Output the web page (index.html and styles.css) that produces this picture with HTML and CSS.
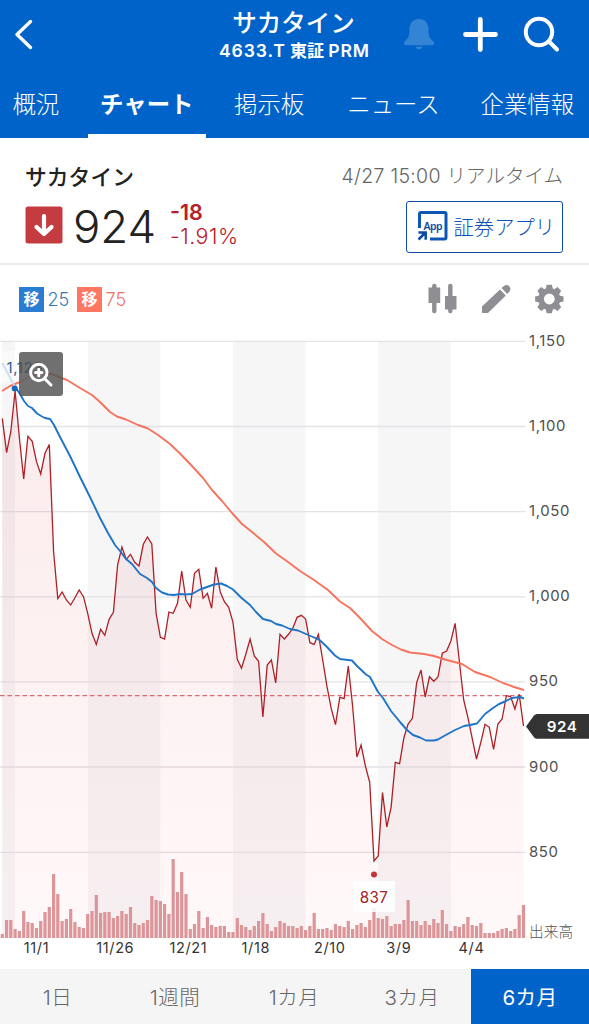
FILE: index.html
```html
<!DOCTYPE html>
<html lang="ja">
<head>
<meta charset="UTF-8">
<title>サカタインクス チャート</title>
<link rel="stylesheet" href="styles.css">
</head>

<body>

<header class="header">
  <div class="title-bar">
    <svg class="back" width="40" height="68" viewBox="0 0 40 68">
      <path d="M30.5 21.5 L17 34.5 L30.5 47.5"/>
    </svg>
    <div class="title">
      <div class="title-name">サカタイン</div>
      <div class="title-code">4633.T <span class="market">東証</span> PRM</div>
    </div>
    <svg class="actions" width="189" height="68" viewBox="400 0 189 68">
      <path class="bell" d="M419 19 C426 19 428.5 24 428.5 30 C428.5 37 430 38.5 433 41 C435 43 434 45.200 432.500 45.200 H405.500 C404 45.200 403 43 405 41 C408 38.500 409.500 37 409.500 30 C409.500 24 412 19 419 19 Z M415.500 46.800 H422.500 C422 49.900 416 49.900 415.500 46.800 Z"/>
      <path class="plus" d="M480.300 19.500 V49.500 M465.500 34.500 H495.500"/>
      <circle class="lens" cx="539" cy="32" r="13.200"/>
      <path class="handle" d="M549 41.500 L557 49.500"/>
    </svg>
  </div>

  <nav class="tabs">
    <a class="tab tab-overview">概況</a>
    <a class="tab tab-chart">チャート</a>
    <a class="tab tab-board">掲示板</a>
    <a class="tab tab-news">ニュース</a>
    <a class="tab tab-company">企業情報</a>
  </nav>
</header>

<section class="quote">
  <div class="quote-left">
    <div class="name">サカタイン</div>
    <div class="price-row">
      <svg class="down" width="38" height="38" viewBox="0 0 38 38">
        <rect x="0.500" y="0.500" width="37" height="37" rx="2.500"/>
        <path d="M19 10 V27 M11.500 21 L19 28 L26.500 21"/>
      </svg>
      <div class="price">924</div>
      <div class="change">
        <div class="diff">-18</div>
        <div class="percent">-1.91%</div>
      </div>
    </div>
  </div>
  <div class="quote-right">
    <div class="time">4/27 15:00 <span class="realtime">リアルタイム</span></div>
    <a class="app-button">
      <svg width="32" height="32" viewBox="0 0 32 32">
        <path class="frame" d="M2.500 18 V4 Q2.500 2.500 4 2.500 H27.500 Q29 2.500 29 4 V27.500 Q29 29 27.500 29 H13"/>
        <path class="arrow" d="M1.500 29.500 L8.500 22.500 M1.500 22.500 H8.700 V29.700"/>
        <text x="6.500" y="19.500" textLength="19">App</text>
      </svg>
      <span>証券アプリ</span>
    </a>
  </div>
</section>

<section class="toolbar">
  <div class="legend">
    <span class="mark mark-short">移</span><span class="days days-short">25</span>
    <span class="mark mark-long">移</span><span class="days days-long">75</span>
  </div>
  <svg class="tools" width="137" height="32" viewBox="427 283 137 32">
    <path class="wick" d="M434.300 286 V311 M450.300 286 V311"/>
    <path d="M428.500 287.500 H440.200 V303 H428.500 Z M445 296 H456.500 V309.500 H445 Z"/>
    <path d="M482 313 V306.500 L500 289.500 L505.800 295.500 L488 313 Z M501.500 288 L504.500 285.500 Q507 284 509.300 286.300 Q511.500 289 509.500 291.500 L507.200 294 Z"/>
    <g id="gear">
      <circle class="gear-ring" cx="549.300" cy="299" r="8.200"/>
    </g>
  </svg>
</section>

<svg class="chart" width="589" height="629" viewBox="0 340 589 629">
  <defs>
    <linearGradient id="area-fill" x1="0" y1="0" x2="0" y2="1">
      <stop offset="0" stop-color="#c8202c" stop-opacity="0.090"/>
      <stop offset="1" stop-color="#ff3040" stop-opacity="0.035"/>
    </linearGradient>
  </defs>
  <g class="bands">
    <rect x="2" y="341" width="13" height="597"/>
    <rect x="88" y="341" width="72.300" height="597"/>
    <rect x="233" y="341" width="72.300" height="597"/>
    <rect x="378" y="341" width="72.800" height="597"/>
  </g>
  <path class="grid" d="M0 341.300 H525.500 M0 426.500 H525.500 M0 511.600 H525.500 M0 596.800 H525.500 M0 681.900 H525.500 M0 767 H525.500 M0 852.300 H525.500"/>
  <path id="area" fill="url(#area-fill)"/>
  <path id="volume"/>
  <path class="previous" d="M0 695.600 H524"/>
  <polyline id="price-line"/>
  <polyline id="long-line"/>

  <rect class="label-back" x="0" y="351" width="47" height="31"/>
  <path class="faded" d="M2.300 363 L14.500 386"/>
  <polyline id="short-line"/>
  <text class="high" x="6.500" y="373">1,123</text>
  <circle class="high-dot" cx="14.700" cy="388.500" r="3"/>
  <circle class="low-dot" cx="374" cy="874.500" r="3"/>
  <rect class="low-back" x="353" y="881" width="42" height="31"/>
  <text class="low" x="374" y="903">837</text>

  <g class="y-axis">
    <text x="529" y="346">1,150</text>
    <text x="529" y="431">1,100</text>
    <text x="529" y="516">1,050</text>
    <text x="529" y="601">1,000</text>
    <text x="529" y="686">950</text>
    <text x="529" y="771.500">900</text>
    <text x="529" y="856.500">850</text>
  </g>
  <text class="volume-label" x="529" y="937">出来高</text>

  <g class="x-axis">
    <text x="36.500" y="953">11/1</text>
    <text x="115.300" y="953">11/26</text>
    <text x="188.300" y="953">12/21</text>
    <text x="255.800" y="953">1/18</text>
    <text x="329.800" y="953">2/10</text>
    <text x="398.800" y="953">3/9</text>
    <text x="471.500" y="953">4/4</text>
  </g>

  <path class="tag" d="M526 726.500 L534 715.500 Q535.500 714 537 714 H589 V738.700 H537 Q535.500 738.700 534 737.200 Z"/>
  <text class="tag-text" x="562" y="732">924</text>

  <!-- zoom button -->
  <rect class="zoom-back" x="19" y="352" width="44" height="44" rx="3"/>
  <g class="zoom-icon">
    <circle cx="38.800" cy="372.500" r="8.200"/>
    <path d="M45 379 L51 385 M38.800 369.300 V375.700 M35.600 372.500 H42"/>
  </g>
</svg>

<nav class="periods">
  <a class="period">1日</a>
  <a class="period">1週間</a>
  <a class="period">1カ月</a>
  <a class="period">3カ月</a>
  <a class="period selected">6カ月</a>
</nav>

<script src="chart.js"></script>
</body>
</html>
```

FILE: styles.css
```css
body {
  margin: 0;
  width: 589px;
  height: 1024px;
  display: flex;
  flex-direction: column;
  background: #fff;
  color: #222;
  font-family: Inter, "Noto Sans CJK JP", sans-serif;
  overflow: hidden;
}

svg {
  display: block;
  flex: none;
}

/* header */
.header {
  height: 138px;
  background: #0063c9;
  color: #fff;
}

.title-bar {
  height: 70px;
  display: grid;
  grid-template-columns: 189px 211px 189px;
}

.title {
  text-align: center;
  padding-top: 7px;
}

.title-name {
  height: 32px;
  line-height: 32px;
  font-size: 24.5px;
  font-weight: 500;
  margin-left: -2px;
}

.title-code {
  height: 22px;
  line-height: 24px;
  font-size: 17.6px;
  font-weight: 600;
  letter-spacing: 0.85px;
  white-space: nowrap;
}

.market {
  font-size: 17px;
  letter-spacing: 0;
  margin: 0 -1px;
}

.back path, .plus, .lens, .handle {
  fill: none;
  stroke: #fff;
  stroke-width: 4;
  stroke-linecap: round;
  stroke-linejoin: round;
}

.back path {
  stroke-width: 3.4;
}

.plus {
  stroke-width: 4.8;
}

.bell {
  fill: #3484d6;
}

.tabs {
  height: 68px;
  display: flex;
  font-size: 23.4px;
  font-weight: 300;
}

.tab {
  box-sizing: border-box;
  height: 68px;
  line-height: 69px;
  text-align: center;
  white-space: nowrap;
}

.tab-overview {
  width: 72px;
  margin-right: 16px;
}

.tab-chart {
  width: 119px;
  font-weight: 700;
  border-bottom: 4px solid #fff;
}

.tab-board {
  width: 127px;
}

.tab-news {
  width: 120px;
}

.tab-company {
  width: 127px;
  margin-left: 11px;
}

.tab-news, .tab-company {
  padding-left: 3px;
}

/* price */
.quote {
  box-sizing: border-box;
  height: 127px;
  padding: 25px 26px 0 25px;
  display: flex;
  justify-content: space-between;
  border-bottom: 2px solid #ebebed;
}

.name {
  height: 28px;
  line-height: 28px;
  font-size: 21.8px;
  font-weight: 500;
}

.price-row {
  display: flex;
  height: 60px;
  padding-top: 9px;
}

.down {
  margin-top: 6px;
}

.down rect {
  fill: #c43c40;
}

.down path {
  fill: none;
  stroke: #fff;
  stroke-width: 4.2;
  stroke-linecap: round;
  stroke-linejoin: round;
}

.price {
  width: 97px;
  margin-left: 10px;
  font-size: 45.5px;
  font-weight: 300;
  line-height: 53px;
}

.change {
  color: #b5202a;
  font-size: 21.5px;
  line-height: 24px;
}

.diff {
  font-weight: 600;
}

.percent {
  font-weight: 300;
  letter-spacing: 0.5px;
}

.quote-right {
  display: flex;
  flex-direction: column;
  align-items: flex-end;
}

.time {
  height: 38px;
  line-height: 27px;
  color: #666;
  font-size: 19.5px;
  font-weight: 300;
  letter-spacing: 0.3px;
}

.realtime {
  letter-spacing: 0;
}

.app-button {
  box-sizing: border-box;
  width: 157px;
  height: 52px;
  padding: 0 7px 2px 10px;
  display: flex;
  align-items: center;
  justify-content: space-between;
  border: 1.5px solid #0c4ca8;
  border-radius: 3px;
  color: #0c52b8;
  font-size: 20.3px;
  font-weight: 300;
}

.frame {
  fill: none;
  stroke: #0e56b4;
  stroke-width: 3;
}

.arrow {
  fill: none;
  stroke: #0c4aa4;
  stroke-width: 2.5;
}

.app-button text {
  fill: #0c4aa4;
  font: 600 10.5px "Noto Sans", sans-serif;
}

/* indicators */
.toolbar {
  height: 75px;
  box-sizing: border-box;
  padding: 18px 25px 0 19px;
  display: flex;
  justify-content: space-between;
}

.legend {
  display: flex;
  height: 32px;
  align-items: center;
  font-size: 18px;
  font-weight: 300;
}

.mark {
  width: 25px;
  height: 25px;
  line-height: 24px;
  text-align: center;
  color: #fff;
  font-size: 16px;
  font-weight: 700;
}

.mark-short {
  background: #2b7cd3;
}

.mark-long {
  background: #ff7662;
}

.days {
  box-sizing: border-box;
  width: 33px;
  padding-left: 3.5px;
}

.days-short {
  color: #3278bb;
}

.days-long {
  color: #f37363;
}

.tools {
  fill: #8e8e93;
}

.wick {
  stroke: #8e8e93;
  stroke-width: 4.4;
  stroke-linecap: round;
}

.gear-ring {
  fill: none;
  stroke: #8e8e93;
  stroke-width: 5.6;
}

/* chart */
.chart {
  overflow: visible;
}

.bands {
  fill: #f6f6f7;
}

.grid {
  stroke: #e2e2e8;
  stroke-width: 1.3;
}

#volume {
  stroke: #dc9599;
  stroke-width: 3.2;
}

.previous {
  stroke: #de6a70;
  stroke-width: 1.3;
  stroke-dasharray: 4.5 3;
}

#price-line, #long-line, #short-line, .faded {
  fill: none;
  stroke-width: 1.9;
  stroke-linejoin: round;
}

#price-line {
  stroke: #ad2025;
  stroke-width: 1.3;
  stroke-linejoin: miter;
}

#long-line {
  stroke: #f7735e;
}

#short-line {
  stroke: #1e74c8;
}

.faded {
  stroke: #cbdff4;
}

.label-back {
  fill: #fff;
  opacity: 0.45;
}

.low-back {
  fill: #fff;
  opacity: 0.85;
}

.high {
  font-size: 15px;
  letter-spacing: 0.6px;
  fill: #1d5f9f;
}

.high-dot {
  fill: #1769b4;
}

.low-dot {
  fill: #c7343a;
}

.low {
  font-size: 15.2px;
  letter-spacing: 0.4px;
  fill: #a5252c;
  text-anchor: middle;
}

.y-axis, .x-axis {
  font-size: 14.9px;
  letter-spacing: 0.65px;
  fill: #505050;
}

.x-axis {
  font-size: 14.5px;
  letter-spacing: 0.6px;
  fill: #333;
  text-anchor: middle;
}

.volume-label {
  font-size: 14.7px;
  font-weight: 300;
  fill: #555;
}

.tag {
  fill: #333;
}

.tag-text {
  fill: #fff;
  font-size: 15.2px;
  font-weight: 600;
  letter-spacing: 0.5px;
  text-anchor: middle;
}

.zoom-back {
  fill: #505050;
  opacity: 0.82;
}

.zoom-icon {
  fill: none;
  stroke: #fff;
  stroke-width: 3;
  stroke-linecap: round;
}

/* period selector */
.periods {
  height: 55px;
  display: grid;
  grid-template-columns: 115px 120px 118px 118px 118px;
  background: #f5f5f6;
}

.period {
  line-height: 57px;
  text-align: center;
  color: #666;
  font-size: 20.5px;
  font-weight: 300;
  letter-spacing: 0.5px;
}

.selected {
  background: #0063c9;
  color: #fff;
  font-weight: 400;
}
```

FILE: chart.js
```js
// daily closing positions, one point per trading day
var price = [
  418.3, 452.7, 431.7, 391, 438, 479, 436.3, 441.3, 461.7, 474,
  453.3, 444.5, 551.7, 598.5, 592, 600, 605, 597.7, 590, 596.7,
  613.3, 633.3, 644.5, 629.3, 635.3, 619.3, 612.3, 565, 547, 559.3,
  554.3, 562.3, 566, 544.3, 537, 544, 613.3, 637.3, 639, 612,
  613.3, 603.3, 571, 600, 607.3, 573.3, 569.3, 598.3, 593.3, 608.3,
  567, 591.7, 601.7, 607.3, 622.3, 659.3, 668.3, 654.3, 639, 656,
  661.3, 717, 665, 660, 683, 634.3, 639, 634.3, 628.3, 617.3,
  615.3, 619, 642.7, 644.3, 634.3, 660, 686.7, 708.3, 724.7, 697.3,
  698.7, 666, 706, 757, 745, 766, 782.3, 861, 856, 792.5,
  827, 807.3, 762.3, 763.7, 737.7, 724, 718.3, 682.3, 670, 697,
  676.7, 681.3, 677, 653.3, 651, 641, 623.3, 661.7, 700, 717.3,
  738.3, 759, 742.3, 724.3, 727.3, 749.3, 724, 719, 695.7, 696.7,
  709, 694.3, 726
];

var volume = [
  4, 18, 18, 9, 7, 27, 16, 15, 10, 17, 26, 31, 64, 44, 17, 19, 29, 16, 11, 10,
  24, 27, 43, 25, 26, 26, 20, 22, 27, 24, 31, 15, 13, 15, 18, 42, 38, 37, 34, 24,
  79, 46, 66, 44, 9, 14, 27, 10, 21, 13, 11, 12, 12, 6, 6, 20, 13, 11, 8, 12,
  17, 25, 14, 7, 11, 17, 15, 12, 12, 10, 12, 8, 12, 25, 9, 9, 10, 8, 14, 12,
  11, 17, 9, 13, 15, 11, 18, 30, 20, 19, 22, 12, 14, 14, 18, 38, 17, 17, 13, 17,
  13, 19, 15, 28, 14, 7, 12, 11, 14, 21, 13, 12, 15, 5, 5, 5, 7, 9, 10, 7,
  9, 23, 33
];

var shortAverage = "14.5,386 20,394 24,401 28,406 32,408 37,413.5 42,416.5 45,418 50,419 54,425 60,437 70,456 80,477 90,497 100,518 108,533 115,545 120,551 126,559 132,564 140,574 147,578 152,582 156,588 162,592.5 168,594.5 174,595 180,594 185,594.5 192,594 200,589.5 207,587 214,584.5 221,583.5 227,586 233,589.5 241,597.5 250,605 256,612 263,619 271,621 276,624 282,625.5 290,629 298,630.5 306,634 313,637 319,639.5 327,647 335,655.5 340,659 344,659.5 348,660 352,660.5 357,666 366,674.5 370,677 378,692 383,698 391,711 400,722 407,730 413,735 420,737.5 426,740.5 434,740.5 438,739.5 444,736 455,730 464,726 470,725 477,723.5 485,714 493,708 499,704 505,701.5 512,698 520,697 524,698.5";

var longAverage = "2,391 10,386 20,382 30,376 42,373 52,374 60,377.5 67,380 80,388 92,395 100,402 110,412 117,416.5 126,419.5 138,425 148,428.5 158,435 170,444 180,453.5 192,466 203,478 212,490 222,501 232,513 242,524 252,532 264,542 276,553.5 286,560.5 300,571 314,580 328,590 340,601.5 350,608 360,618 372,631 382,639 392,645 401,649.5 410,652.5 424,654 434,656 445,659.5 462,664 475,672 490,677 503,683 514,687 524,690";

var base = 938;
var points = [];
var bars = "";

for (var i = 0; i < price.length; i++) {
  var x = (2.3 + i * 4.272).toFixed(1);
  points.push(x + "," + price[i]);
  bars += "M" + x + " " + base + "V" + (base - volume[i]);
}

document.getElementById("price-line").setAttribute("points", points.join(" "));
document.getElementById("short-line").setAttribute("points", shortAverage);
document.getElementById("long-line").setAttribute("points", longAverage);
document.getElementById("volume").setAttribute("d", bars);
document.getElementById("area").setAttribute("d",
  "M2.3 " + base + "L" + points.join("L") + "V" + base + "Z");

// teeth of the gear icon
var gear = document.getElementById("gear");
for (var t = 0; t < 8; t++) {
  var tooth = document.createElementNS("http://www.w3.org/2000/svg", "path");
  tooth.setAttribute("d", "M545.7 289 L546.7 284.8 H551.9 L552.9 289 Z");
  tooth.setAttribute("transform", "rotate(" + t * 45 + " 549.3 299)");
  gear.appendChild(tooth);
}
```
